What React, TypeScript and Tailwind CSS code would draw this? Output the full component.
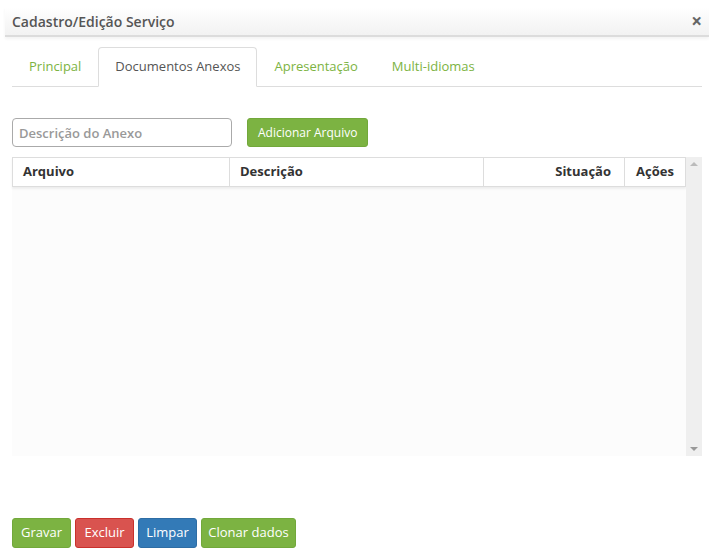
import React, { useState } from 'react';

const TABS = ['Principal', 'Documentos Anexos', 'Apresentação', 'Multi-idiomas'];

const App: React.FC = () => {
  const [active, setActive] = useState(1);
  const [desc, setDesc] = useState('');

  return (
    <div className="w-[709px] h-[557px] bg-white font-['Open_Sans',sans-serif] text-[13px] text-[#333] pt-[7px] pl-[5px] overflow-hidden">
      {/* cabeçalho */}
      <div className="flex items-center justify-between h-[30px] pl-[7px] pr-[7px] bg-gradient-to-b from-[#ffffff] to-[#f2f2f2] border-b-2 border-[#dcdcdc] shadow-[0_2px_3px_rgba(0,0,0,0.05)]">
        <span className="text-[14px] font-semibold text-[#555]">Cadastro/Edição Serviço</span>
        <span className="text-[19px] font-bold text-[#666] leading-none">×</span>
      </div>

      <div className="pl-[7px] pr-[7px]">
        {/* abas */}
        <div className="flex mt-[10px] border-b border-[#ddd] h-[40px]">
          {TABS.map((tab, i) => (
            <button
              key={tab}
              onClick={() => setActive(i)}
              className={`px-[16px] h-[40px] text-[13px] rounded-t-[4px] border ${
                active === i
                  ? 'bg-white border-[#ddd] border-b-white -mb-px text-[#555]'
                  : 'border-transparent text-[#7cb342]'
              }`}
            >
              {tab}
            </button>
          ))}
        </div>

        {/* formulário */}
        <div className="flex items-center mt-[31px] gap-[15px]">
          <input
            value={desc}
            onChange={(e) => setDesc(e.target.value)}
            placeholder="Descrição do Anexo"
            className="w-[220px] h-[29px] px-[6px] border border-[#aaa] rounded-[4px] text-[13px] font-semibold placeholder:text-[#999] outline-none"
          />
          <button className="h-[29px] px-[10px] bg-[#7cb342] border border-[#72a83b] rounded-[3px] text-white text-[12px]">
            Adicionar Arquivo
          </button>
        </div>

        {/* tabela */}
        <div className="flex mt-[10px] w-[690px] h-[299px]">
          <div className="flex-1 flex flex-col bg-[#fcfcfc]">
            <div className="flex h-[30px] bg-white border border-[#ddd] shadow-[0_2px_2px_rgba(0,0,0,0.06)] font-bold text-[13px] text-[#333]">
              <div className="w-[217px] pl-[10px] flex items-center border-r border-[#ddd]">Arquivo</div>
              <div className="w-[254px] pl-[10px] flex items-center border-r border-[#ddd]">Descrição</div>
              <div className="w-[141px] pr-[13px] flex items-center justify-end border-r border-[#ddd]">Situação</div>
              <div className="flex-1 flex items-center justify-center">Ações</div>
            </div>
          </div>
          <div className="w-[16px] bg-[#efefef] flex flex-col items-center justify-between py-[5px]">
            <div className="w-0 h-0 border-l-[4px] border-r-[4px] border-b-[4px] border-l-transparent border-r-transparent border-b-[#bbb]" />
            <div className="w-0 h-0 border-l-[4px] border-r-[4px] border-t-[4px] border-l-transparent border-r-transparent border-t-[#999]" />
          </div>
        </div>

        {/* ações */}
        <div className="flex gap-[4px] mt-[62px]">
          <button className="h-[30px] w-[59px] bg-[#7cb342] border border-[#72a83b] rounded-[3px] text-white text-[13px]">Gravar</button>
          <button className="h-[30px] w-[59px] bg-[#d9534f] border border-[#c9302c] rounded-[3px] text-white text-[13px]">Excluir</button>
          <button className="h-[30px] w-[59px] bg-[#337ab7] border border-[#2e6da4] rounded-[3px] text-white text-[13px]">Limpar</button>
          <button className="h-[30px] w-[95px] bg-[#7cb342] border border-[#72a83b] rounded-[3px] text-white text-[13px]">Clonar dados</button>
        </div>
      </div>
    </div>
  );
};

export default App;
